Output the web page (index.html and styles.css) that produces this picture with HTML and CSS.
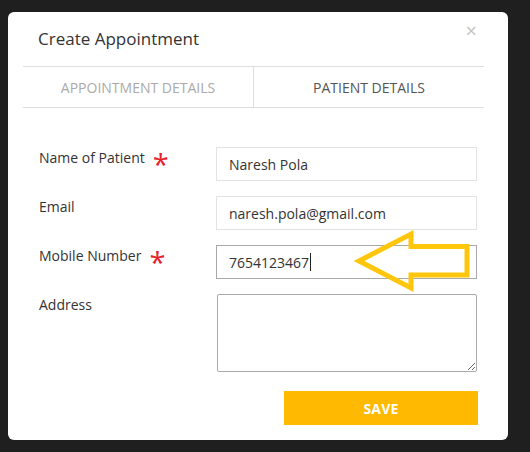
FILE: index.html
```html
<!DOCTYPE html>
<html lang="en">
<head>
<meta charset="utf-8">
<title>Create Appointment</title>
<link rel="stylesheet" href="styles.css">
</head>
<body>
  <div class="modal">
    <div class="modal-header">
      <h4 class="modal-title">Create Appointment</h4>
      <button class="close" type="button">&times;</button>
    </div>
    <div class="tabs">
      <div class="tab">APPOINTMENT DETAILS</div>
      <div class="tab active">PATIENT DETAILS</div>
    </div>
    <form class="form">
      <label class="label">Name of Patient <span class="req">*</span></label>
      <input class="input" type="text" value="Naresh Pola">

      <label class="label">Email</label>
      <input class="input" type="text" value="naresh.pola@gmail.com">

      <label class="label">Mobile Number <span class="req">*</span></label>
      <div class="input focused">7654123467<span class="caret"></span></div>

      <label class="label">Address</label>
      <textarea class="textarea"></textarea>

      <button class="save" type="button">SAVE</button>
    </form>
  </div>
  <svg class="arrow" width="530" height="452" viewBox="0 0 530 452">
    <path d="M359,261 L411,234 L411,246.5 L467,246.5 L467,275 L411,275 L411,288 Z" fill="none" stroke="#ffc60b" stroke-width="5" stroke-linejoin="miter" stroke-miterlimit="10"/>
  </svg>
</body>
</html>
```
FILE: styles.css
```css
* { box-sizing: border-box; }
html, body {
  margin: 0;
  padding: 0;
}
body {
  background: #1f1f1f;
  font-family: "Open Sans", "Liberation Sans", sans-serif;
  color: #333;
  padding: 12px 0 0 8px;
  height: 452px;
  overflow: hidden;
  position: relative;
}
.modal {
  width: 500px;
  background: #fff;
  border-radius: 6px;
  padding: 0 24px 15px 15px;
}
.modal-header {
  display: flex;
  justify-content: space-between;
  align-items: flex-start;
  height: 54px;
  padding: 15px 7px 0 15px;
}
.modal-title {
  margin: 0;
  font-size: 17px;
  font-weight: 400;
  line-height: 23px;
  color: #333;
}
.close {
  border: 0;
  background: none;
  padding: 0;
  margin-top: -4px;
  font-family: "Open Sans", sans-serif;
  font-size: 20px;
  line-height: 16px;
  color: #c4c4c4;
}
.tabs {
  display: flex;
  border-top: 1px solid #dedede;
  border-bottom: 1px solid #dedede;
  height: 42px;
}
.tab {
  flex: 1;
  display: flex;
  align-items: center;
  justify-content: center;
  font-size: 14px;
  color: #aaa;
}
.tab + .tab {
  border-left: 1px solid #dedede;
}
.tab.active {
  color: #555;
}
.form {
  display: grid;
  grid-template-columns: 193px 261px;
  row-gap: 15px;
  padding-top: 39px;
}
.label {
  padding-left: 16px;
  padding-top: 1px;
  font-size: 14px;
  line-height: 20px;
  color: #333;
  display: flex;
  align-items: flex-start;
}
.req {
  color: #e8212b;
  font-size: 29px;
  line-height: 20px;
  height: 20px;
  margin-left: 8px;
  padding-top: 6px;
}
.input {
  height: 34px;
  border: 1px solid #e3e3e3;
  padding: 0 12px;
  font-family: "Open Sans", sans-serif;
  font-size: 14px;
  color: #333;
  outline: none;
  border-radius: 0;
}
.input.focused {
  border-color: #a9a9a9;
  display: flex;
  align-items: center;
}
.caret {
  display: inline-block;
  width: 1px;
  height: 18px;
  background: #222;
  margin-left: 1px;
}
.textarea {
  display: block;
  height: 78px;
  margin-left: 1px;
  border: 1px solid #aaa;
  border-radius: 2px;
  resize: vertical;
  font-family: "Open Sans", sans-serif;
  font-size: 14px;
}
.save {
  grid-column: 2;
  justify-self: end;
  width: 194px;
  height: 34px;
  margin-top: 4px;
  margin-right: -1px;
  border: 0;
  background: #ffb900;
  color: #fff;
  font-family: "Open Sans", sans-serif;
  font-weight: 700;
  font-size: 14px;
  letter-spacing: 0.2px;
}
.arrow {
  position: absolute;
  left: 0;
  top: 0;
  pointer-events: none;
}
```
